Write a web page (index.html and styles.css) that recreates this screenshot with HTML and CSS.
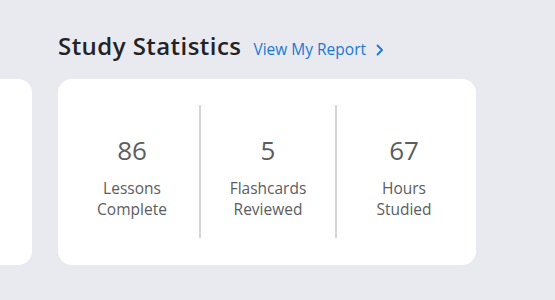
FILE: index.html
```html
<!DOCTYPE html>
<html>
<head>
<meta charset="utf-8">
<link rel="stylesheet" href="styles.css">
</head>
<body>
<div class="page">
  <div class="header">
    <h2 class="title">Study Statistics</h2>
    <a class="report-link" href="#">View My Report
      <svg class="chevron" width="8" height="12" viewBox="0 0 8 12"><path d="M1.5 1.5 L6 6 L1.5 10.5" fill="none" stroke="#1a78d2" stroke-width="1.8" stroke-linecap="round" stroke-linejoin="round"/></svg>
    </a>
  </div>
  <div class="cards">
    <div class="card card-stub"></div>
    <div class="card stats">
      <div class="stat">
        <div class="stat-num">86</div>
        <div class="stat-label">Lessons<br>Complete</div>
      </div>
      <div class="stat divided">
        <div class="stat-num">5</div>
        <div class="stat-label">Flashcards<br>Reviewed</div>
      </div>
      <div class="stat divided">
        <div class="stat-num">67</div>
        <div class="stat-label">Hours<br>Studied</div>
      </div>
    </div>
  </div>
</div>
</body>
</html>
```
FILE: styles.css
```css
html, body {
  margin: 0;
  padding: 0;
  background: #e9eaf0;
  font-family: "Open Sans", Lato, sans-serif;
  overflow: hidden;
}
.page {
  width: 555px;
  height: 300px;
}
.header {
  display: flex;
  align-items: baseline;
  gap: 12px;
  padding: 31px 0 0 58px;
  height: 48px;
  box-sizing: content-box;
}
.title {
  margin: 0;
  font-size: 24px;
  font-weight: 600;
  letter-spacing: 0.45px;
  color: #222326;
  line-height: 30px;
}
.report-link {
  display: flex;
  align-items: center;
  gap: 10px;
  font-size: 15.5px;
  color: #1a78d2;
  text-decoration: none;
}
.chevron {
  position: relative;
  top: 1px;
}
.cards {
  display: flex;
  gap: 26px;
  margin-left: -168px;
}
.card {
  background: #fff;
  border-radius: 14px;
  height: 186px;
}
.card-stub {
  width: 200px;
}
.stats {
  width: 418px;
  box-sizing: border-box;
  padding: 26px 5px 27px 7px;
  display: flex;
}
.stat {
  flex: 1;
  text-align: center;
  padding-top: 28px;
  color: #5b5d61;
}
.stat.divided {
  border-left: 2px solid #d4d4d6;
}
.stat-num {
  font-size: 26px;
  line-height: 34px;
}
.stat-label {
  margin-top: 11px;
  font-size: 15.5px;
  line-height: 21px;
}
```
